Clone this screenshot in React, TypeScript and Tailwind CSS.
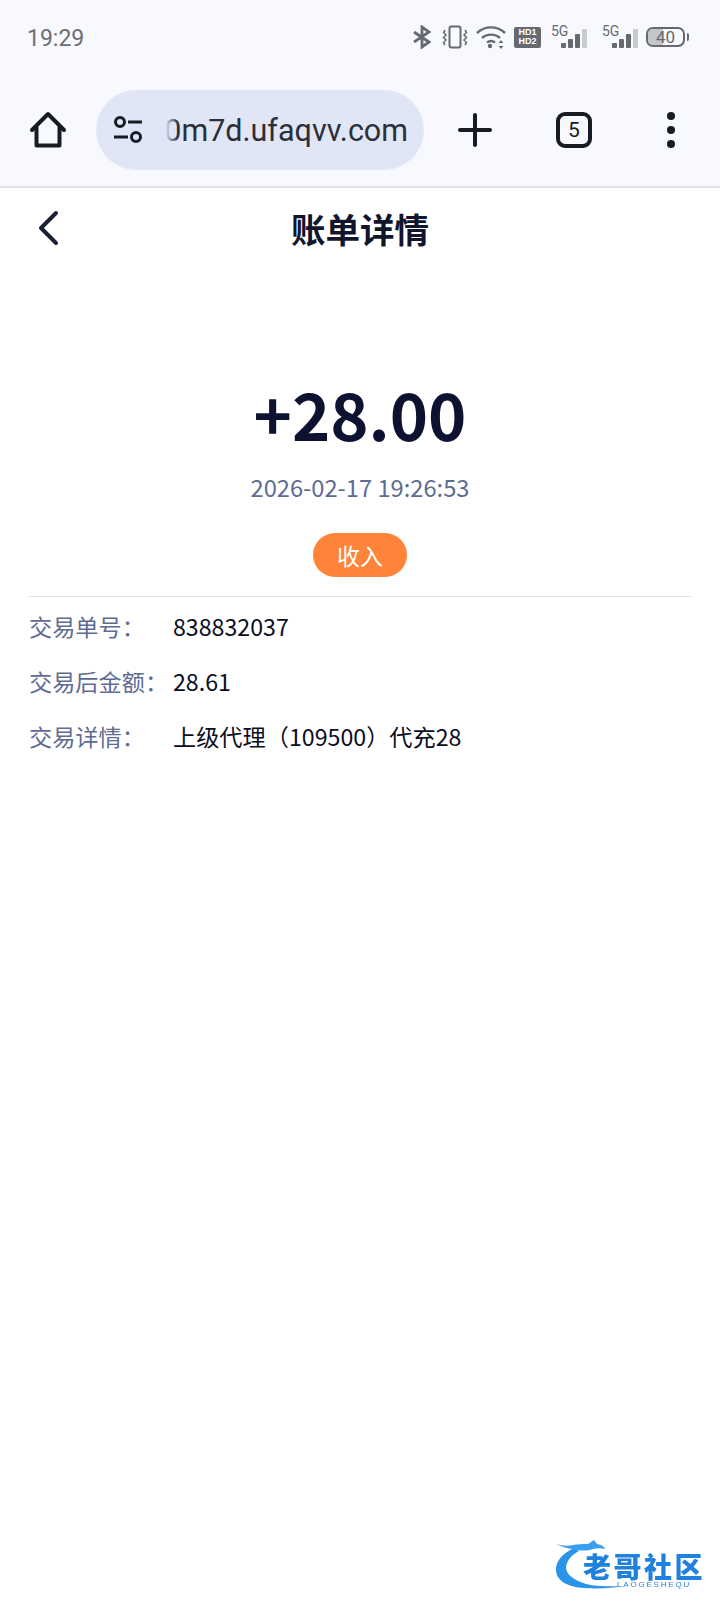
const cjk = "font-['Noto_Sans_CJK_SC','Noto_Sans',sans-serif]";

function StatusIcons() {
  return (
    <div className="flex items-center text-[#666a70]">
      <svg width="20" height="24" viewBox="0 0 20 24" fill="none" stroke="currentColor" strokeWidth="2.8" className="mr-[10px]">
        <path d="M2 7l15 10-7 5V2l7 5L2 17" />
      </svg>
      <svg width="26" height="24" viewBox="0 0 26 24" fill="none" stroke="currentColor" strokeWidth="2" className="mr-[8px]">
        <rect x="7.5" y="1.5" width="11" height="21" rx="2" />
        <path d="M3 5l-1.5 2.5L4 10l-2.500 2.500L4 15l-2.500 2.500L3 20M23 5l1.500 2.500L22 10l2.500 2.500L22 15l2.500 2.500L23 20" strokeWidth="1.5" />
      </svg>
      <svg width="30" height="24" viewBox="0 0 30 24" fill="none" stroke="currentColor" strokeWidth="2.4" className="mr-[8px]">
        <path d="M1 8c8-7.500 20-7.500 28 0M6 13c5-4.500 13-4.500 18 0M11 17.500c2.500-2 5.500-2 8 0" />
        <circle cx="14" cy="21" r="2.200" fill="currentColor" stroke="none" />
        <path d="M25 15l-2.500 3h5zM25 24l-2.500-3h5z" fill="currentColor" stroke="none" />
      </svg>
      <div className="w-[27px] h-[21px] rounded-[2px] bg-[#666a70] mr-[10px] flex flex-col items-center justify-center text-white font-['Liberation_Sans',sans-serif] text-[9px] font-bold leading-[9px]">
        <span>HD1</span>
        <span>HD2</span>
      </div>
      <Signal className="mr-[10px]" />
      <Signal className="mr-[3px]" />
      <div className="flex items-center">
        <div className="relative w-[39px] h-[20px] rounded-[7px] border-2 border-[#666a70] overflow-hidden flex items-center justify-center">
          <div className="absolute left-0 top-0 bottom-0 w-[15px] bg-[#c4c6ca]" />
          <span className="relative font-['Roboto',sans-serif] text-[17px] leading-none">40</span>
        </div>
        <div className="w-[2px] h-[8px] ml-[2px] rounded-r bg-[#666a70]" />
      </div>
    </div>
  );
}

function Signal({ className }: { className: string }) {
  return (
    <div className={`relative w-[41px] h-[24px] ${className}`}>
      <span className="absolute left-0 -top-[1px] font-['Roboto',sans-serif] text-[14px] leading-[14px]">5G</span>
      <svg width="41" height="24" viewBox="0 0 41 24" fill="currentColor">
        <rect x="10" y="18" width="5" height="5" rx="1" />
        <rect x="17" y="14" width="5" height="9" rx="1" />
        <rect x="24" y="9" width="5" height="14" rx="1" />
        <rect x="31" y="4" width="5" height="19" rx="1" fill="#c8cacd" />
      </svg>
    </div>
  );
}

function BrowserBar() {
  return (
    <div className="bg-[#f8f9ff] h-[188px] border-b-2 border-[#e0e4ea]">
      <div className="h-[90px] pl-[27px] pr-[31px] pt-[22px] flex justify-between items-start">
        <span className="font-['Roboto',sans-serif] text-[23px] leading-[32px] text-[#6b6e73] mt-[1px]">19:29</span>
        <div className="mt-[3px]">
          <StatusIcons />
        </div>
      </div>
      <div className="h-[80px] flex items-center text-[#171b24]">
        <div className="w-[96px] flex justify-center">
          <svg width="38" height="38" viewBox="0 0 38 38" fill="none" stroke="currentColor" strokeWidth="4" strokeLinejoin="round" strokeLinecap="round">
            <path d="M3 19L19 3l16 16M7.500 16v18.500h23V16" />
          </svg>
        </div>
        <div className="w-[328px] h-[80px] rounded-full bg-[#e0e6f6] flex items-center overflow-hidden pl-[17px]">
          <svg width="30" height="30" viewBox="0 0 30 30" fill="none" stroke="currentColor" strokeWidth="3" className="shrink-0">
            <circle cx="7" cy="7" r="4.500" />
            <circle cx="23" cy="22" r="4.500" />
            <path d="M15 7h14M1 22h14" />
          </svg>
          <div className="relative ml-[17px] w-[248px] h-[40px] overflow-hidden">
            <span className="absolute right-0 top-[1px] whitespace-nowrap font-['Roboto',sans-serif] text-[30.5px] leading-[40px] text-[#2b2f38]">0m7d.ufaqvv.com</span>
            <div className="absolute left-0 top-0 bottom-0 w-[18px] bg-gradient-to-r from-[#e0e6f6] from-30% to-transparent" />
          </div>
        </div>
        <div className="flex-1 flex items-center">
          <div className="w-[78px] ml-[12px] flex justify-center">
            <svg width="34" height="34" viewBox="0 0 34 34" fill="none" stroke="currentColor" strokeWidth="4" strokeLinecap="round">
              <path d="M17 2v30M2 17h30" />
            </svg>
          </div>
          <div className="w-[120px] flex justify-center">
            <div className="w-[36px] h-[36px] rounded-[9px] border-[4px] border-[#171b24] flex items-center justify-center font-['Roboto',sans-serif] text-[21px] leading-none">5</div>
          </div>
          <div className="flex-1 flex flex-col items-center gap-[6px] pr-[12px]">
            <span className="w-[8px] h-[8px] rounded-full bg-[#171b24]" />
            <span className="w-[8px] h-[8px] rounded-full bg-[#171b24]" />
            <span className="w-[8px] h-[8px] rounded-full bg-[#171b24]" />
          </div>
        </div>
      </div>
    </div>
  );
}

function Logo() {
  return (
    <div className="relative w-[150px] h-[54px] blur-[0.6px]">
      <svg width="150" height="54" viewBox="0 0 150 54" fill="none" className="absolute left-0 top-0">
        <path d="M19 10C6 16 0 25 1 33c1 10 12 16 28 17 16 1 28 0 40-2-20 1-36 0-46-5C13 38 9 32 12 25c2-5 6-9 12-12z" fill="#2a94ea" />
        <path d="M1 6c8 2 12 2 17 1 4-1 10-1 15-1l6-4 3 4 4 1 3 2 1 2c-4-1-8-1-12 0-6 2-13 2-19 0C14 11 8 9 1 6z" fill="#3a9fee" />
      </svg>
      <span className={`absolute left-[28px] top-[16px] whitespace-nowrap ${cjk} font-black text-[28px] leading-[24px] tracking-[2.500px] text-[#1f80de]`}>老哥社区</span>
      <span className="absolute left-[62px] top-[43px] whitespace-nowrap font-['Liberation_Sans',sans-serif] text-[8px] leading-[8px] tracking-[1.800px] text-[#2a7fd8]">LAOGESHEQU</span>
    </div>
  );
}

export default function App() {
  const rows = [
    ["交易单号：", "838832037"],
    ["交易后金额：", "28.61"],
    ["交易详情：", "上级代理（109500）代充28"],
  ];

  return (
    <div className={`w-[720px] h-[1612px] bg-white flex flex-col ${cjk}`}>
      <BrowserBar />
      <div className="h-[82px] flex items-center relative justify-center">
        <svg width="24" height="36" viewBox="0 0 24 36" fill="none" stroke="#1b2036" strokeWidth="4" strokeLinecap="round" strokeLinejoin="round" className="absolute left-[36px] top-[22px]">
          <path d="M20 3L5 18l15 15" />
        </svg>
        <h1 className="text-[34.500px] leading-[48px] font-bold text-[#12162c] -mt-[2px]">账单详情</h1>
      </div>
      <div className="flex flex-col items-center">
        <div className="mt-[95px] text-[65px] leading-[96px] font-bold text-[#0d1230]">+28.00</div>
        <div className="mt-[8px] text-[23.700px] leading-[36px] text-[#5e6b93]">2026-02-17 19:26:53</div>
        <div className="mt-[28px] w-[94px] h-[44px] rounded-full bg-[#ff8338] flex items-center justify-center text-[23px] leading-none text-white">收入</div>
      </div>
      <div className="mx-[29px] mt-[19px] h-[1px] bg-[#e2e3e6]" />
      <div className="px-[29px] pt-[11px] flex flex-col gap-[19px]">
        {rows.map(([label, value]) => (
          <div key={label} className="flex text-[23.200px] leading-[36px]">
            <span className="w-[144px] shrink-0 text-[#5e6b93] whitespace-nowrap">{label}</span>
            <span className="text-[#0b0e22] whitespace-nowrap">{value}</span>
          </div>
        ))}
      </div>
      <div className="flex-1 flex justify-end items-end pr-[15px] pb-[20px]">
        <Logo />
      </div>
    </div>
  );
}
